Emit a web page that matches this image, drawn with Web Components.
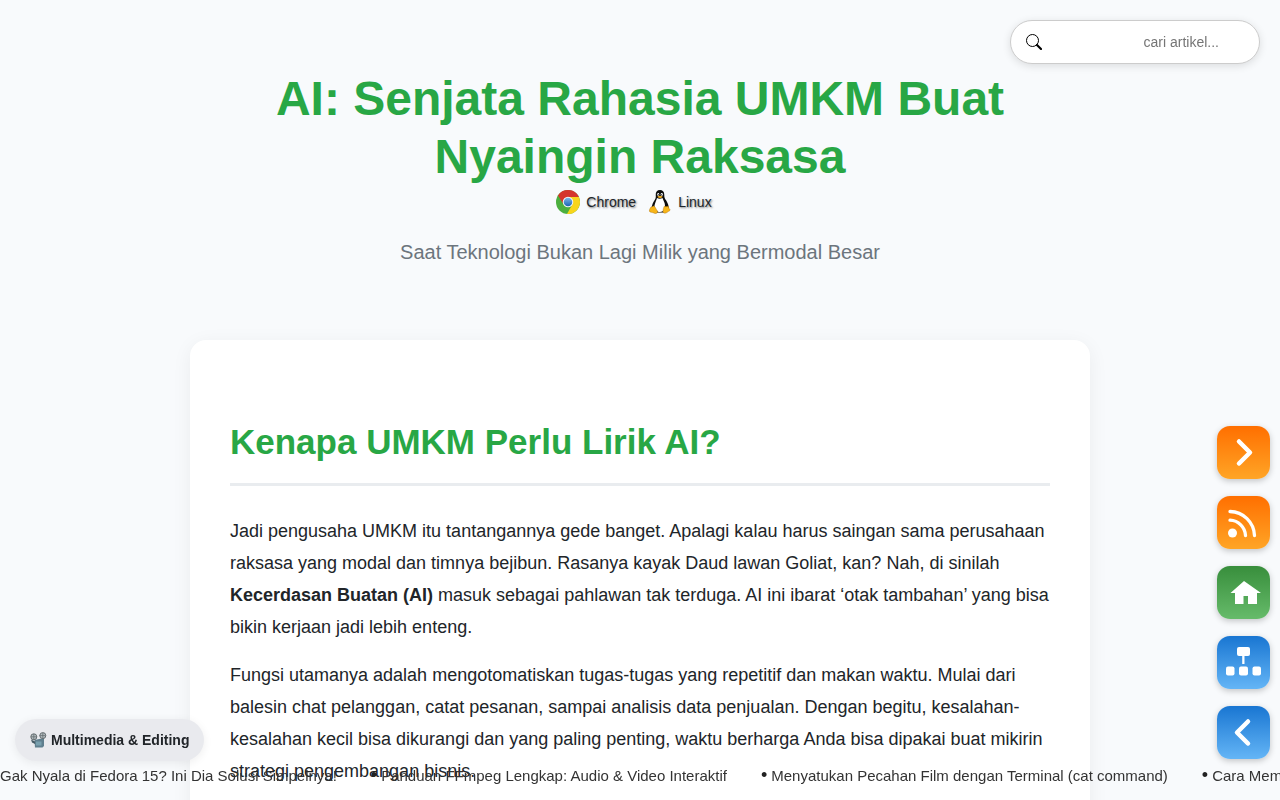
<!DOCTYPE html>
<html lang="id">
<head>
<meta charset="utf-8">
<meta name="viewport" content="width=device-width, initial-scale=1">
<title>AI: Senjata Rahasia UMKM Buat Nyaingin Raksasa</title>
<style>
html { scrollbar-width: none; }
body { margin: 0; background: #f8fafc; color: #212529; font-family: "Liberation Sans", Arial, sans-serif; }
</style>
</head>
<body>
<article-page></article-page>

<template id="t-page">
<style>
:host { display: block; padding: 70px 20px 120px; }
main { max-width: 900px; margin: 0 auto; }
search-box { position: fixed; top: 20px; right: 20px; z-index: 5; }
side-nav { position: fixed; right: 10px; bottom: 41px; z-index: 5; }
category-pill { position: fixed; left: 15px; bottom: 39px; z-index: 4; }
news-ticker { position: fixed; left: 0; right: 0; bottom: 12px; z-index: 3; }
</style>
<search-box></search-box>
<main>
  <page-hero>
    AI: Senjata Rahasia UMKM Buat Nyaingin Raksasa
    <span slot="subtitle">Saat Teknologi Bukan Lagi Milik yang Bermodal Besar</span>
  </page-hero>
  <article-card>
    <span slot="title">Kenapa UMKM Perlu Lirik AI?</span>
    <p>Jadi pengusaha UMKM itu tantangannya gede banget. Apalagi kalau harus saingan sama perusahaan raksasa yang modal dan timnya bejibun. Rasanya kayak Daud lawan Goliat, kan? Nah, di sinilah <strong>Kecerdasan Buatan (AI)</strong> masuk sebagai pahlawan tak terduga. AI ini ibarat ‘otak tambahan’ yang bisa bikin kerjaan jadi lebih enteng.</p>
    <p>Fungsi utamanya adalah mengotomatiskan tugas-tugas yang repetitif dan makan waktu. Mulai dari balesin chat pelanggan, catat pesanan, sampai analisis data penjualan. Dengan begitu, kesalahan-kesalahan kecil bisa dikurangi dan yang paling penting, waktu berharga Anda bisa dipakai buat mikirin strategi pengembangan bisnis.</p>
  </article-card>
</main>
<side-nav></side-nav>
<category-pill>Multimedia &amp; Editing</category-pill>
<news-ticker></news-ticker>
</template>

<template id="t-hero">
<style>
:host { display: block; text-align: center; padding: 0 40px 72px; }
h1 { margin: 0; font-size: 48px; line-height: 58px; font-weight: 700; color: #28a745; }
.p { margin: 0; font-size: 20px; line-height: 32px; color: #6c757d; }
.badges { display: flex; justify-content: center; gap: 12px; height: 32px; align-items: center; padding-right: 12px; margin-bottom: 18px; }
.badge { display: flex; align-items: center; gap: 6px; font-size: 14px; line-height: 20px; color: #212529; text-shadow: 1px 1px 2px rgba(0,0,0,.5); }
svg { display: block; width: 24px; height: 24px; }
</style>
<h1><slot></slot></h1>
<div class="badges">
  <span class="badge">
    <svg viewBox="0 0 48 48" aria-hidden="true">
      <defs><linearGradient id="b" x2="0" y2="1"><stop stop-color="#7db8e8"/><stop offset="1" stop-color="#1c62b5"/></linearGradient></defs>
      <circle cx="24" cy="24" r="24" fill="#4caf3f"/>
      <path d="M24 14H45.800A24 24 0 0 1 22 48L32.700 29Z" fill="#f8d51c"/>
      <path d="M24 14H45.800A24 24 0 0 0 4 11L15.300 29Z" fill="#d5352b"/>
      <circle cx="24" cy="24" r="10.500" fill="#f4f4f4"/><circle cx="24" cy="24" r="8.500" fill="url(#b)"/>
    </svg>Chrome</span>
  <span class="badge">
    <svg viewBox="0 0 48 48" aria-hidden="true">
      <path d="M24 0c-6 0-9 4-8.500 10 .5 7-1 8-4 13-3 5-4 10-5 14l8 8h19l8-8c0-6-2-11-5-16-3-4-4-6-4-12C32.500 3 29 0 24 0Z" fill="#0c0c0c"/>
      <path d="M18 16c-1 5-4 9-5 15-1 8 4 13 11 13s11-6 10-13c0-6-4-11-5-15-3 2-8 2-11 0Z" fill="#fff"/>
      <ellipse cx="20.500" cy="9" rx="2" ry="2.800" fill="#fff"/><ellipse cx="27.500" cy="9" rx="2.200" ry="2.800" fill="#fff"/>
      <circle cx="21" cy="9.500" r="1.200"/><circle cx="27" cy="9.500" r="1.200"/>
      <path d="M18.500 13.500c3-3 8-3 11 0-3 3-7 4-11 0Z" fill="#e8a51c"/>
      <path d="M6 34c3 0 4-3 6-2 3 2 4 7 7 10 1 3-2 6-5 5-4-2-7-2-10-3-3-2 0-7 2-10Z" fill="#f7b519" stroke="#a66b09" stroke-width=".8"/>
      <path d="M33 32c3 2 5 1 8 0 0 4 1 5 3 7 1 3-3 3-6 6-3 2-7 2-8-1 0-5 1-9 3-12Z" fill="#f7b519" stroke="#a66b09" stroke-width=".8"/>
    </svg>Linux</span>
</div>
<p class="p"><slot name="subtitle"></slot></p>
</template>

<template id="t-card">
<style>
:host { display: block; background: #fff; border-radius: 16px; padding: 80px 40px 60px; box-shadow: 0 4px 20px rgba(0,0,0,.06); }
h2 { margin: 0 0 29px; padding-bottom: 20px; border-bottom: 3px solid #e9ecef; font-size: 35px; line-height: 43px; color: #28a745; }
::slotted(p) { margin: 0 0 16px; font-size: 18px; line-height: 32px; }
</style>
<h2><slot name="title"></slot></h2>
<slot></slot>
</template>

<template id="t-search">
<style>
:host { display: block; width: 250px; }
label { display: flex; align-items: center; box-sizing: border-box; height: 44px; padding: 0 40px 0 15px; background: #fff; border: 1px solid #ccc; border-radius: 22px; box-shadow: 0 2px 8px rgba(0,0,0,.12); }
svg { width: 16px; height: 16px; flex: none; }
input { flex: 1; min-width: 0; border: 0; outline: 0; padding: 0; background: none; text-align: right; font: 14px/20px "Liberation Sans", Arial, sans-serif; color: #212529; }
input::placeholder { color: #757575; }
</style>
<label>
  <svg viewBox="0 0 16 16" aria-hidden="true"><circle cx="6.500" cy="6.500" r="6" fill="none" stroke="#000" stroke-width="1"/><path d="M11 11l4 4" stroke="#000" stroke-width="2.200" stroke-linecap="round"/></svg>
  <input type="text" placeholder="cari artikel..." aria-label="Cari artikel">
</label>
</template>

<template id="t-nav">
<style>
:host { display: block; }
nav { display: flex; flex-direction: column; gap: 17px; }
a { display: block; width: 53px; height: 53px; border-radius: 13px; box-shadow: 0 2px 6px rgba(0,0,0,.22); }
.orange { background: linear-gradient(#ff6f00, #ffa526); }
.green { background: linear-gradient(#388e3c, #66bb6a); }
.blue { background: linear-gradient(#1976d2, #64b5f6); }
svg { display: block; width: 53px; height: 53px; fill: #fff; }
.line { fill: none; stroke: #fff; stroke-width: 4.500; stroke-linecap: round; stroke-linejoin: round; }
</style>
<nav aria-label="Navigasi">
  <a class="orange" href="#next" aria-label="Berikutnya"><svg viewBox="0 0 53 53"><path class="line" d="M22 15.500 33 26.500 22 37.500"/></svg></a>
  <a class="orange" href="#rss" aria-label="RSS"><svg viewBox="0 0 53 53"><circle cx="15.500" cy="37" r="4.500"/><path class="line" style="stroke-width:3.300" d="M13 24.200A16 16 0 0 1 28.500 39.500M13 15.500A25 25 0 0 1 37.500 39.500"/></svg></a>
  <a class="green" href="#home" aria-label="Beranda"><svg viewBox="0 0 53 53"><path d="M27 15 44 27H40V38H31V30H26.500V38H18V27H13.500Z"/></svg></a>
  <a class="blue" href="#sitemap" aria-label="Peta situs"><svg viewBox="0 0 53 53"><rect x="20" y="11" width="13" height="9" rx="2"/><path d="M25.200 19H27.500V28H25.200Z"/><rect x="9" y="30.500" width="8.500" height="9" rx="2"/><rect x="22" y="30.500" width="9" height="9" rx="2"/><rect x="35.500" y="30.500" width="8.500" height="9" rx="2"/></svg></a>
  <a class="blue" href="#prev" aria-label="Sebelumnya"><svg viewBox="0 0 53 53"><path class="line" d="M31 15.500 20 26.500 31 37.500"/></svg></a>
</nav>
</template>

<template id="t-pill">
<style>
:host { display: block; }
button { display: flex; align-items: center; gap: 4px; height: 42px; margin: 0; padding: 0 15px; border: 0; border-radius: 21px; background: #e9eaee; color: #212529; font: 700 14px/20px "Liberation Sans", Arial, sans-serif; box-shadow: 0 2px 10px rgba(0,0,0,.07); }
svg { width: 17px; height: 16px; }
</style>
<button type="button">
  <svg viewBox="0 0 17 16" aria-hidden="true">
    <path d="M4.500 8 14 6V14L12.500 15.500H5Z" fill="#5f7f8e"/><path d="M6 9.500H11.500V13.500H6Z" fill="#78a0ae"/><path d="M1 7.500 5 9.500V12L2 10.500Z" fill="#455a64"/>
    <g fill="#b4bdc1" stroke="#656d70" stroke-width="1"><circle cx="3.800" cy="4.800" r="3"/><circle cx="12.800" cy="3.600" r="3"/></g>
    <g stroke="#656d70" stroke-width=".8"><path d="M3.800 2V8M1 4.800H7M12.800 1V7M9.500 3.600H15.500"/></g>
  </svg>
  <slot></slot>
</button>
</template>

<template id="t-ticker">
<style>
:host { display: block; overflow: hidden; }
ul { display: flex; gap: 34px; margin: 0; padding: 0; list-style: none; white-space: nowrap; font-size: 15px; line-height: 24px; }
li { display: flex; gap: 4px; }
span { font-size: 18px; line-height: 22px; color: #222; }
a { color: #333; text-decoration: none; }
</style>
<ul>
  <li><a href="#t1">Gak Nyala di Fedora 15? Ini Dia Solusi Simpelnya!</a></li>
  <li><span>•</span><a href="#t2">Panduan FFmpeg Lengkap: Audio &amp; Video Interaktif</a></li>
  <li><span>•</span><a href="#t3">Menyatukan Pecahan Film dengan Terminal (cat command)</a></li>
  <li><span>•</span><a href="#t4">Cara Membuat Video</a></li>
</ul>
</template>

<script>
const define = (name, templateId) => customElements.define(name, class extends HTMLElement {
  constructor() {
    super();
    this.attachShadow({ mode: "open" }).append(document.getElementById(templateId).content.cloneNode(true));
  }
});
define("page-hero", "t-hero");
define("article-card", "t-card");
define("search-box", "t-search");
define("side-nav", "t-nav");
define("category-pill", "t-pill");
define("news-ticker", "t-ticker");
define("article-page", "t-page");
</script>
</body>
</html>
